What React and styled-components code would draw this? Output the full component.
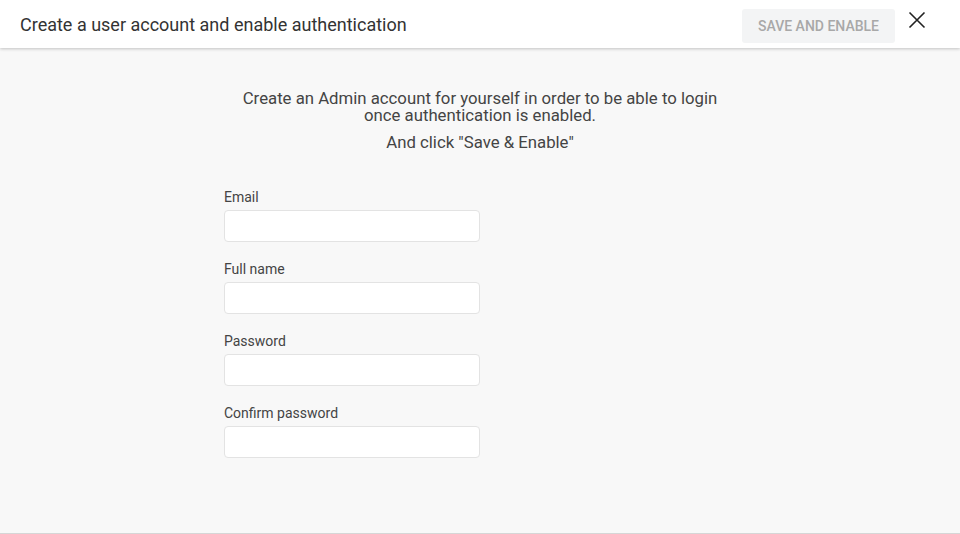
import React from "react";
import styled, { createGlobalStyle } from "styled-components";

const GlobalStyle = createGlobalStyle`
  html, body {
    margin: 0;
    padding: 0;
    background: #f8f8f8;
    font-family: Roboto, "Liberation Sans", sans-serif;
  }
  * { box-sizing: border-box; }
`;

const Page = styled.div`
  height: 534px;
  display: flex;
  flex-direction: column;
  background: #f8f8f8;
  border-bottom: 1px solid #d6d6d6;
`;

const Header = styled.header`
  height: 48px;
  flex-shrink: 0;
  display: flex;
  align-items: center;
  padding: 0 34px 0 20px;
  background: #fff;
  box-shadow: 0 1px 3px rgba(0, 0, 0, 0.22);
  position: relative;
  z-index: 1;
`;

const Title = styled.h1`
  flex: 1;
  margin: 0;
  font-size: 18px;
  font-weight: 400;
  color: #333;
`;

const SaveButton = styled.button`
  height: 34px;
  padding: 0 16px;
  margin-top: 4px;
  border: none;
  border-radius: 3px;
  background: #f3f4f5;
  color: #a8a8a8;
  font-family: inherit;
  font-size: 14px;
  font-weight: 500;
  text-transform: uppercase;
  cursor: default;
`;

const CloseButton = styled.button`
  margin-left: 13px;
  margin-bottom: 8px;
  padding: 0;
  border: none;
  background: none;
  display: flex;
  color: #222;
  cursor: pointer;
`;

const Body = styled.main`
  flex: 1;
  display: flex;
  flex-direction: column;
  align-items: center;
  padding-top: 42px;
`;

const Intro = styled.p`
  margin: 0;
  width: 500px;
  text-align: center;
  font-size: 16.75px;
  line-height: 17px;
  color: #444;
`;

const Hint = styled(Intro)`
  margin-top: 10px;
`;

const Form = styled.form`
  width: 512px;
  margin-top: 38px;
  display: flex;
  flex-direction: column;
  gap: 19px;
`;

const Field = styled.div`
  width: 256px;
  display: flex;
  flex-direction: column;
`;

const Label = styled.label`
  font-size: 14px;
  line-height: 16px;
  color: #444;
  margin-bottom: 5px;
`;

const Input = styled.input`
  height: 32px;
  border: 1px solid #e3e3e3;
  border-radius: 4px;
  background: #fff;
  padding: 0 8px;
  font-family: inherit;
  font-size: 14px;
  outline: none;
`;

const fields = [
  { id: "email", label: "Email", type: "email" },
  { id: "name", label: "Full name", type: "text" },
  { id: "password", label: "Password", type: "password" },
  { id: "confirm", label: "Confirm password", type: "password" },
];

export default function App() {
  return (
    <>
      <GlobalStyle />
      <Page>
        <Header>
          <Title>Create a user account and enable authentication</Title>
          <SaveButton disabled>Save and enable</SaveButton>
          <CloseButton aria-label="Close">
            <svg width="18" height="18" viewBox="0 0 18 18">
              <path d="M1.5 1.5 L16.5 16.5 M16.5 1.5 L1.5 16.5" stroke="currentColor" strokeWidth="1.6" />
            </svg>
          </CloseButton>
        </Header>
        <Body>
          <Intro>
            Create an Admin account for yourself in order to be able to login once authentication is enabled.
          </Intro>
          <Hint>And click "Save &amp; Enable"</Hint>
          <Form>
            {fields.map((f) => (
              <Field key={f.id}>
                <Label htmlFor={f.id}>{f.label}</Label>
                <Input id={f.id} type={f.type} />
              </Field>
            ))}
          </Form>
        </Body>
      </Page>
    </>
  );
}
